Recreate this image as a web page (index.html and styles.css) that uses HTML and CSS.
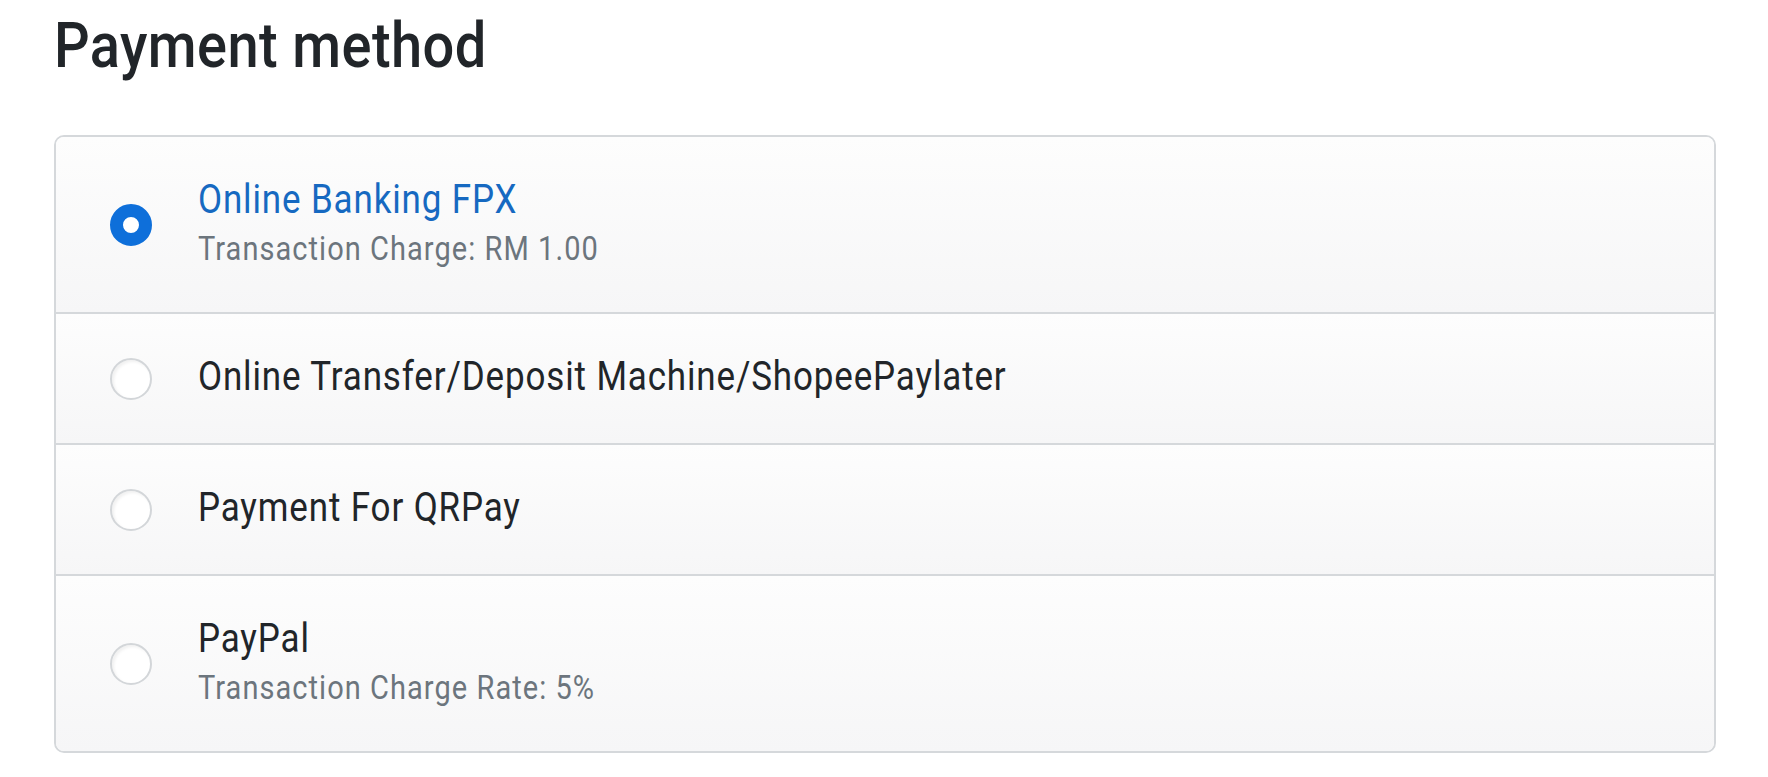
FILE: index.html
```html
<!DOCTYPE html>
<html lang="en">
<head>
<meta charset="utf-8">
<title>Payment method</title>
<link rel="stylesheet" href="styles.css">
</head>
<body>
<main class="page">
  <h1 class="heading">Payment method</h1>
  <div class="methods">
    <label class="method is-selected">
      <span class="radio radio-checked"></span>
      <span class="info">
        <span class="title">Online Banking FPX</span>
        <span class="note">Transaction Charge: RM 1.00</span>
      </span>
    </label>
    <label class="method">
      <span class="radio"></span>
      <span class="info">
        <span class="title">Online Transfer/Deposit Machine/ShopeePaylater</span>
      </span>
    </label>
    <label class="method">
      <span class="radio"></span>
      <span class="info">
        <span class="title">Payment For QRPay</span>
      </span>
    </label>
    <label class="method">
      <span class="radio"></span>
      <span class="info">
        <span class="title">PayPal</span>
        <span class="note">Transaction Charge Rate: 5%</span>
      </span>
    </label>
  </div>
</main>
</body>
</html>
```

FILE: styles.css
```css
* { box-sizing: border-box; }
html, body { margin: 0; padding: 0; background: #ffffff; }
body {
  font-family: Roboto, "Liberation Sans", Arial, sans-serif;
  color: #212529;
}
.page {
  padding: 15px 52px 0 54px;
}
.heading {
  margin: 0 0 53px 0;
  font-size: 56px;
  font-weight: 500;
  line-height: 67px;
  letter-spacing: 0.4px;
  color: #212529;
  transform: scaleY(1.13);
  transform-origin: 0 52.7px;
}
.methods {
  border: 2px solid #d5d8db;
  border-radius: 10px;
  overflow: hidden;
}
.method {
  display: flex;
  align-items: center;
  padding: 39.5px 20px 39.5px 54px;
  background: linear-gradient(#fdfdfd, #f6f6f7);
  border-top: 2px solid #d5d8db;
  cursor: pointer;
}
.method:first-child { border-top: 0; }
.radio {
  flex: none;
  width: 42px;
  height: 42px;
  border-radius: 50%;
  border: 2px solid #d3d6d9;
  background: #ffffff;
  box-shadow: inset 2px 2px 3px rgba(0,0,0,0.06);
  margin-right: 46px;
}
.radio-checked {
  border: 13px solid #0e6fda;
  background: #ffffff;
  box-shadow: none;
}
.info {
  display: flex;
  flex-direction: column;
}
.title {
  font-size: 35px;
  line-height: 50px;
  letter-spacing: 0.85px;
  color: #212529;
  transform: scaleY(1.14);
  transform-origin: 0 37px;
}
.is-selected .title { color: #1669c1; }
.note {
  font-size: 29px;
  line-height: 46px;
  letter-spacing: 1.05px;
  color: #6c757d;
  transform: scaleY(1.14);
  transform-origin: 0 33px;
}
```
